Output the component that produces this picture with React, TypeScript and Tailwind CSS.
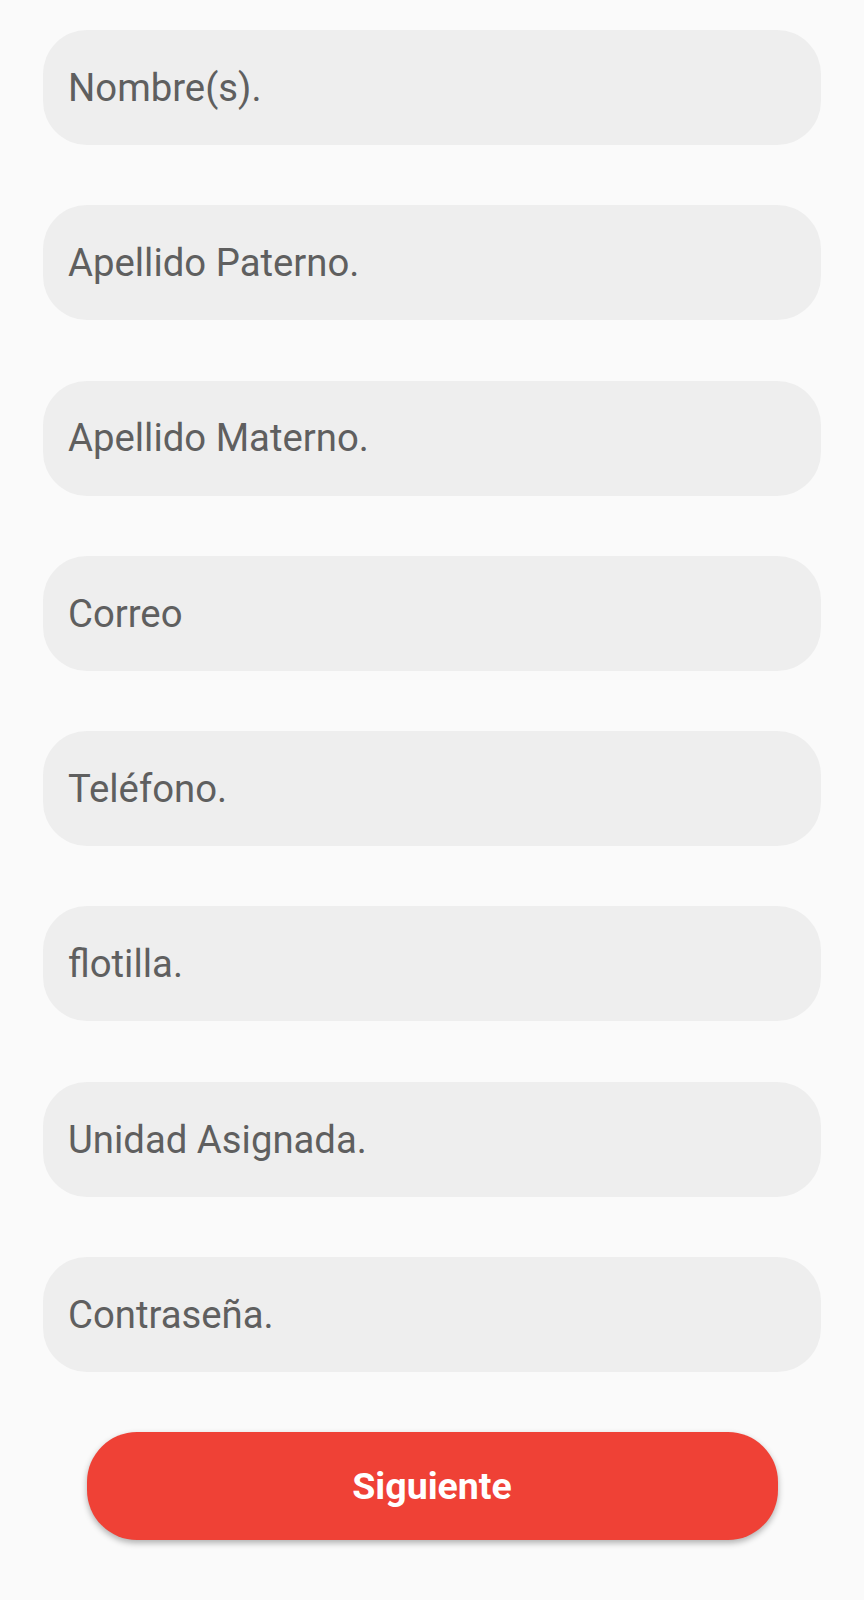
const fields = [
  "Nombre(s).",
  "Apellido Paterno.",
  "Apellido Materno.",
  "Correo",
  "Teléfono.",
  "flotilla.",
  "Unidad Asignada.",
  "Contraseña.",
]

export default function App() {
  return (
    <div className="min-h-[1600px] w-full bg-[#fafafa] font-['Roboto','Liberation_Sans',sans-serif]">
      <form className="flex flex-col gap-[60.3px] px-[43px] pt-[30px]" onSubmit={(e) => e.preventDefault()}>
        {fields.map((label) => (
          <div
            key={label}
            className="flex h-[115px] items-center rounded-[44px] bg-[#eeeeee] pl-[25px] text-[38.3px] text-[#5f5f5f]"
          >
            {label}
          </div>
        ))}
        <div className="flex justify-center">
          <button
            type="submit"
            className="h-[108px] w-[691px] rounded-[50px] bg-[#ef4136] text-[37.5px] font-bold text-white shadow-[0_3px_6px_rgba(0,0,0,0.3)]"
          >
            Siguiente
          </button>
        </div>
      </form>
    </div>
  )
}
